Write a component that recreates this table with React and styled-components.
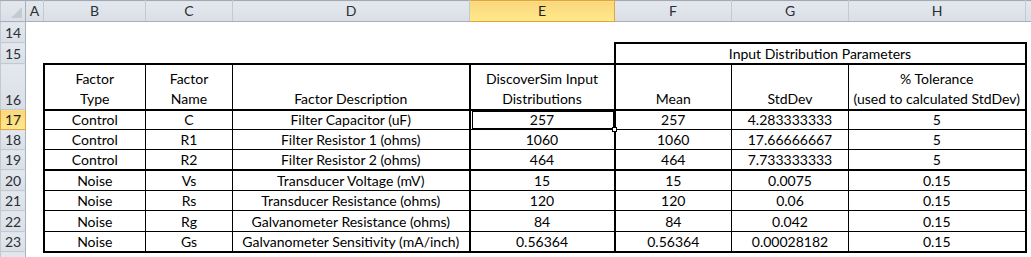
import React from 'react';
import styled, { createGlobalStyle, css } from 'styled-components';

const GlobalStyle = createGlobalStyle`
	html, body {
		margin: 0;
		padding: 0;
		background: #fff;
		overflow: hidden;
	}
	body {
		font-family: Lato, "Open Sans", sans-serif;
	}
`;

const Sheet = styled.table`
	border-collapse: collapse;
	table-layout: fixed;
	width: 1031px;
	font-family: Lato, "Open Sans", sans-serif;
	font-size: 14px;
	color: #000;
`;

const Row = styled.tr`
	height: ${p => p.$h}px;
`;

const HeadRow = styled.tr`
	height: 21px;
`;

const headBg = css`
	background: linear-gradient(#e4e8ee, #dadfe6);
	color: #2b2f36;
	font-weight: normal;
	font-size: 14px;
	padding: 0;
	border: 1px solid #c3c9d1;
`;

const activeBg = css`
	background: linear-gradient(#f9d77c, #ffe98a);
	border: 1px solid #e2a43f;
	color: #1e1e1e;
`;

const ColHead = styled.th`
	${headBg}
	border-top-color: #a2a9b3;
	border-bottom-color: #a7b0bb;
	text-align: center;
	vertical-align: middle;
	line-height: 16px;
	${p => p.$active && activeBg}
`;

const Corner = styled.th`
	${headBg}
	border-top-color: #a2a9b3;
	border-bottom-color: #a7b0bb;
	border-right-color: #a7b0bb;
	position: relative;
	&::after {
		content: '';
		position: absolute;
		right: 3px;
		bottom: 3px;
		border-style: solid;
		border-width: 0 0 11px 11px;
		border-color: transparent transparent #c4cad2 transparent;
	}
`;

const RowHead = styled.th`
	${headBg}
	border-right-color: #a7b0bb;
	text-align: center;
	vertical-align: bottom;
	line-height: 16px;
	padding-bottom: 1px;
	${p => p.$active && activeBg}
`;

const line = w => (w === 2 ? '2px solid #000' : w === 1 ? '1px solid #000' : 'none');

const Cell = styled.td`
	padding: 0 2px 1px;
	text-align: center;
	vertical-align: bottom;
	line-height: 17px;
	white-space: nowrap;
	overflow: visible;
	border-top: ${p => line(p.$t)};
	border-right: ${p => line(p.$r)};
	border-bottom: ${p => line(p.$b)};
	border-left: ${p => line(p.$l)};
	position: ${p => (p.$selected ? 'relative' : 'static')};
	${p => p.$multi && css`
		line-height: 20px;
		padding-bottom: 0;
	`}
	${p => p.$selected && css`
		&::after {
			content: '';
			position: absolute;
			left: 1px;
			top: 0;
			right: 0;
			bottom: 0;
			border: 1px solid #000;
		}
		&::before {
			content: '';
			position: absolute;
			right: -3px;
			bottom: -3px;
			width: 3px;
			height: 3px;
			background: #fff;
			border: 1px solid #000;
			z-index: 1;
		}
	`}
`;

// the last column runs past the window edge, so its letter is not shown
const columns = [
	{ key: 'hdr', w: 25 },
	{ key: 'A', w: 18 },
	{ key: 'B', w: 102 },
	{ key: 'C', w: 87 },
	{ key: 'D', w: 237 },
	{ key: 'E', w: 145 },
	{ key: 'F', w: 117 },
	{ key: 'G', w: 117 },
	{ key: 'H', w: 177 },
	{ key: 'I', w: 6, label: '' },
];

// vertical border weights to the right of B..H
const vRight = { B: 1, C: 1, D: 2, E: 2, F: 1, G: 1, H: 2 };

const data = [
	['Control', 'C', 'Filter Capacitor (uF)', '257', '257', '4.283333333', '5'],
	['Control', 'R1', 'Filter Resistor 1 (ohms)', '1060', '1060', '17.66666667', '5'],
	['Control', 'R2', 'Filter Resistor 2 (ohms)', '464', '464', '7.733333333', '5'],
	['Noise', 'Vs', 'Transducer Voltage (mV)', '15', '15', '0.0075', '0.15'],
	['Noise', 'Rs', 'Transducer Resistance (ohms)', '120', '120', '0.06', '0.15'],
	['Noise', 'Rg', 'Galvanometer Resistance (ohms)', '84', '84', '0.042', '0.15'],
	['Noise', 'Gs', 'Galvanometer Sensitivity (mA/inch)', '0.56364', '0.56364', '0.00028182', '0.15'],
];

const heights = [20, 20, 20, 21, 20, 21, 20];
const tableCols = ['B', 'C', 'D', 'E', 'F', 'G', 'H'];

const Br = () => <br />;

export default function App() {
	return (
		<>
			<GlobalStyle />
			<Sheet>
				<colgroup>
					{columns.map(c => <col key={c.key} style={{ width: c.w }} />)}
				</colgroup>
				<thead>
					<HeadRow>
						<Corner />
						{columns.slice(1).map(c => (
							<ColHead key={c.key} $active={c.key === 'E'}>
								{c.label ?? c.key}
							</ColHead>
						))}
					</HeadRow>
				</thead>
				<tbody>
					<Row $h={21}>
						<RowHead>14</RowHead>
						{columns.slice(1).map(c => <Cell key={c.key} />)}
					</Row>
					<Row $h={21}>
						<RowHead>15</RowHead>
						<Cell />
						<Cell />
						<Cell />
						<Cell />
						<Cell $r={2} />
						<Cell colSpan={3} $t={2} $r={2} $l={2} $b={2}>Input Distribution Parameters</Cell>
						<Cell />
					</Row>
					<Row $h={46}>
						<RowHead>16</RowHead>
						<Cell />
						<Cell $multi $t={2} $b={2} $l={2} $r={1}>Factor<Br />Type</Cell>
						<Cell $multi $t={2} $b={2} $r={1}>Factor<Br />Name</Cell>
						<Cell $multi $t={2} $b={2} $r={2}>Factor Description</Cell>
						<Cell $multi $t={2} $b={2} $r={2}>DiscoverSim Input<Br />Distributions</Cell>
						<Cell $multi $t={2} $b={2} $r={1}>Mean</Cell>
						<Cell $multi $t={2} $b={2} $r={1}>StdDev</Cell>
						<Cell $multi $t={2} $b={2} $r={2}>% Tolerance<Br />(used to calculated StdDev)</Cell>
						<Cell />
					</Row>
					{data.map((r, i) => (
						<Row key={i} $h={heights[i]}>
							<RowHead $active={i === 0}>{17 + i}</RowHead>
							<Cell />
							{r.map((v, j) => (
								<Cell
									key={j}
									$l={j === 0 ? 2 : 0}
									$r={vRight[tableCols[j]]}
									$b={i === 2 || i === 6 ? 2 : 1}
									$selected={i === 0 && j === 3}
								>
									{v}
								</Cell>
							))}
							<Cell />
						</Row>
					))}
					{/* row 24 only peeks in at the bottom edge */}
					<Row $h={21}>
						<RowHead />
						{columns.slice(1).map(c => <Cell key={c.key} />)}
					</Row>
				</tbody>
			</Sheet>
		</>
	);
}
